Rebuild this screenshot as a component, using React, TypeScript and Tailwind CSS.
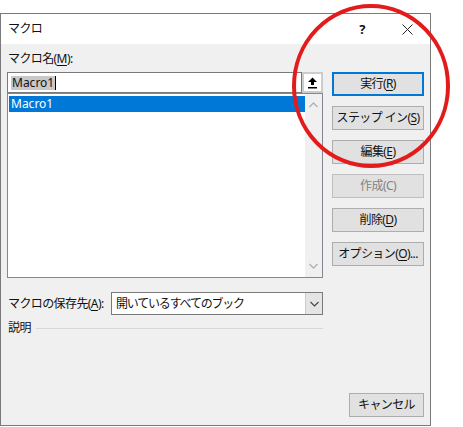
import React from "react";

function Btn({
  children,
  primary,
  disabled,
  className = "",
}: {
  children: React.ReactNode;
  primary?: boolean;
  disabled?: boolean;
  className?: string;
}) {
  return (
    <div
      className={
        "h-[24px] flex items-center justify-center bg-[#e1e1e1] whitespace-nowrap " +
        (primary
          ? "border-2 border-[#0078d7] "
          : disabled
          ? "border border-[#bfbfbf] text-[#838383] "
          : "border border-[#adadad] ") +
        className
      }
    >
      {children}
    </div>
  );
}

export default function App() {
  return (
    <div className="relative w-[463px] h-[427px] bg-white pt-[13px] overflow-hidden text-[12px] leading-[16px] tracking-[-0.6px] text-[#111] font-['Noto_Sans','Noto_Sans_CJK_JP',sans-serif]">
      <div className="w-[431px] h-[413px] border border-[#7a7a7a] flex flex-col">
        {/* title bar */}
        <div className="h-[30px] shrink-0 bg-white flex items-center pl-[7px]">
          <span className="flex-1">マクロ</span>
          <span className="w-[46px] text-center text-[13px] font-bold">?</span>
          <span className="w-[45px] flex items-center justify-center">
            <svg width="11" height="11" viewBox="0 0 11 11">
              <path d="M0.5 0.5 L10.5 10.5 M10.5 0.5 L0.5 10.5" stroke="#222" strokeWidth="1" />
            </svg>
          </span>
        </div>
        {/* body */}
        <div className="flex-1 bg-[#f0f0f0] flex pl-[6px] pr-[6px]">
          {/* left column */}
          <div className="w-[316px] flex flex-col pt-[7px]">
            <div className="pl-[1px] h-[16px]">
              マクロ名(<span className="underline underline-offset-2">M</span>):
            </div>
            <div className="mt-[5px] h-[21px] flex">
              <div className="w-[295px] h-[21px] bg-white border border-[#7a7a7a] flex items-center pl-[3px]">
                <span className="bg-[#c8c8c8] px-[1px] leading-[14px] tracking-normal">Macro1</span>
                <span className="w-px h-[14px] bg-black" />
              </div>
              <div className="w-[21px] h-[21px] border-2 border-[#cccccc] bg-white flex items-center justify-center">
                <svg width="11" height="12" viewBox="0 0 11 12">
                  <path d="M5.5 0.5 L10 5 L7 5 L7 8 L4 8 L4 5 L1 5 Z" fill="#000" />
                  <rect x="1" y="10" width="9" height="1.5" fill="#000" />
                </svg>
              </div>
            </div>
            <div className="h-[185px] bg-white border border-[#828790] flex">
              <div className="flex-1 pt-[2px] pl-[1px]">
                <div className="h-[16px] bg-[#0078d7] text-white pl-[2px] flex items-center tracking-normal">Macro1</div>
              </div>
              <div className="w-[17px] bg-[#f0f0f0] flex flex-col items-center justify-between py-[8px]">
                <svg width="9" height="6" viewBox="0 0 9 6">
                  <path d="M0.5 5 L4.5 1 L8.5 5" stroke="#b0b0b0" strokeWidth="1.3" fill="none" />
                </svg>
                <svg width="9" height="6" viewBox="0 0 9 6">
                  <path d="M0.5 1 L4.5 5 L8.5 1" stroke="#b0b0b0" strokeWidth="1.3" fill="none" />
                </svg>
              </div>
            </div>
            <div className="mt-[14px] h-[23px] flex items-center">
              <span className="pl-[1px] w-[104px] whitespace-nowrap">
                マクロの保存先(<span className="underline underline-offset-2">A</span>):
              </span>
              <div className="w-[212px] h-[23px] border border-[#7a7a7a] bg-white flex">
                <span className="flex-1 pl-[4px] flex items-center tracking-[-1.2px]">開いているすべてのブック</span>
                <div className="w-[17px] bg-[#e5e5e5] border-l border-[#cccccc] flex items-center justify-center">
                  <svg width="9" height="6" viewBox="0 0 9 6">
                    <path d="M0.5 1 L4.5 5 L8.5 1" stroke="#444" strokeWidth="1.1" fill="none" />
                  </svg>
                </div>
              </div>
            </div>
            <div className="mt-[5px] h-[16px] flex items-center">
              <span className="pl-[1px]">説明</span>
              <div className="flex-1 h-px bg-[#d8d8d8] ml-[5px]" />
            </div>
          </div>
          {/* right column */}
          <div className="ml-[9px] w-[92px] flex flex-col pt-[28px] pb-[8px] gap-[10px]">
            <Btn primary>
              実行(<span className="underline underline-offset-2">R</span>)
            </Btn>
            <Btn>
              ステップ イン(<span className="underline underline-offset-2">S</span>)
            </Btn>
            <Btn>
              編集(<span className="underline underline-offset-2">E</span>)
            </Btn>
            <Btn disabled>作成(C)</Btn>
            <Btn>
              削除(<span className="underline underline-offset-2">D</span>)
            </Btn>
            <Btn>
              オプション(<span className="underline underline-offset-2">O</span>)...
            </Btn>
            <div className="mt-auto flex justify-end">
              <Btn className="w-[75px]">キャンセル</Btn>
            </div>
          </div>
        </div>
      </div>
      <svg className="absolute left-0 top-0" width="463" height="427" viewBox="0 0 463 427">
        <ellipse cx="371" cy="86" rx="77" ry="80" fill="none" stroke="#e31b1b" strokeWidth="4" />
      </svg>
    </div>
  );
}
